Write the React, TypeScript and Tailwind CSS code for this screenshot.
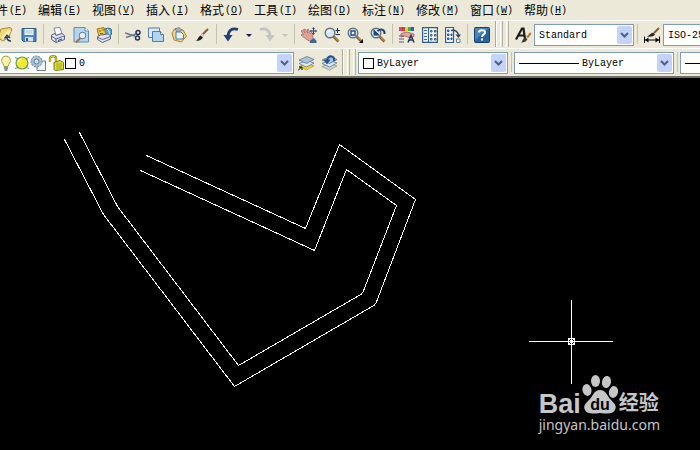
import clsx from 'clsx';
import { ReactNode } from 'react';

const menus = [
  { label: '文件', hotkey: 'F' },
  { label: '编辑', hotkey: 'E' },
  { label: '视图', hotkey: 'V' },
  { label: '插入', hotkey: 'I' },
  { label: '格式', hotkey: 'O' },
  { label: '工具', hotkey: 'T' },
  { label: '绘图', hotkey: 'D' },
  { label: '标注', hotkey: 'N' },
  { label: '修改', hotkey: 'M' },
  { label: '窗口', hotkey: 'W' },
  { label: '帮助', hotkey: 'H' },
];

const Icon = ({ children }: { children: ReactNode }) => (
  <svg viewBox="0 0 16 16" className="size-4 shrink-0" fill="none" aria-hidden="true">
    {children}
  </svg>
);

const Printer = () => (
  <>
    <path d="M4 1l6-.5 2 6-6 2z" fill="#fff" stroke="#8088a8" />
    <path d="M1.500 8L5 6.500l1 2 6-2 2.500 2v4L6 15.500l-4.500-3z" fill="#dfe4f2" stroke="#5a6288" />
    <path d="M2 9.500l4 2.500 8-3M6 12v3" stroke="#5a6288" />
    <path d="M8 13.500l4-1.500" stroke="#343c68" />
  </>
);

const Magnifier = () => (
  <>
    <path d="M9.500 9.500l5 5" stroke="#8a5a28" strokeWidth="2.600" />
    <path d="M10 9.500l4.500 4.500" stroke="#dba860" />
    <circle cx="6" cy="6" r="4.800" fill="#d4e6f5" stroke="#66727e" strokeWidth="1.400" />
    <path d="M3.500 5.500c.3-1.300 1.200-2 2.500-2" stroke="#fff" strokeWidth="1.200" />
  </>
);

const LayerStack = ({ bottom }: { bottom: string }) => (
  <>
    <path d="M1 11.500l8-3 7 2.500-7.500 4z" fill={bottom} stroke="#9a8c30" strokeWidth=".6" />
    <path d="M1 8.500L9 5.500l7 2.500-7.500 4z" fill="#dfe9f2" stroke="#51687c" strokeWidth=".7" />
    <path d="M1 5l8-3.500L16 4.500 8.500 8.500z" fill="#a8c4dc" stroke="#51687c" strokeWidth=".7" />
  </>
);

const icons = {
  open: (
    <Icon>
      <path d="M0 11L3 2l9-1.500 2 1.500-3 8-6 4z" fill="#f3d679" stroke="#a88a34" />
      <path d="M3 11l7-8 3 1-5 8z" fill="#fff0b0" />
      <path d="M13 14c-3 0-4-1.500-4-4M6.500 11.500L9 8.500l3 2.500" stroke="#24406e" strokeWidth="1.600" />
    </Icon>
  ),
  save: (
    <Icon>
      <path d="M1 1.500h14v13H2.500L1 13z" fill="#4b86c0" stroke="#2c5a8c" />
      <path d="M3.500 2h9v6h-9z" fill="#f4f9fd" />
      <path d="M4.500 4h7M4.500 6h7" stroke="#9cbcda" />
      <path d="M4 10h8v4.500H4z" fill="#cfe1f1" />
      <path d="M5 11h2v3H5z" fill="#2c5a8c" />
    </Icon>
  ),
  print: (
    <Icon>
      <Printer />
    </Icon>
  ),
  preview: (
    <Icon>
      <path d="M1 .5h11l3.500 3.500v11H1z" fill="#b5d5ec" stroke="#5f8db8" />
      <path d="M12 .5V4h3.500" fill="#fff" stroke="#5f8db8" />
      <path d="M7.500 11L3 15.500" stroke="#a87440" strokeWidth="2" />
      <circle cx="9.500" cy="8.500" r="3.300" fill="#e4f1fa" stroke="#6a7886" />
    </Icon>
  ),
  publish: (
    <Icon>
      <circle cx="12" cy="5" r="4" fill="#5aa8d0" stroke="#2e6c98" />
      <path d="M11 2c2 1 3 3 2 6" stroke="#d8f0fa" />
      <path d="M1 2l7-1.500 2 7-7 2z" fill="#f2c93c" stroke="#99751e" />
      <path d="M3 4h2M6 3h2M4 6.500h3" stroke="#8c6418" />
      <path d="M1.500 9.500l3-1.500 8-1 2 2v3l-8 3.500-5-3z" fill="#dfe4f2" stroke="#5a6288" />
      <path d="M2 10.500l4.500 2 8-3" stroke="#5a6288" />
    </Icon>
  ),
  cut: (
    <Icon>
      <path d="M0 6l10 3M1 10.500L11 7" stroke="#68788c" strokeWidth="1.400" />
      <circle cx="13" cy="5.500" r="2" stroke="#26345e" strokeWidth="1.500" />
      <circle cx="12.500" cy="11" r="2" stroke="#26345e" strokeWidth="1.500" />
    </Icon>
  ),
  copy: (
    <Icon>
      <path d="M.5 1h11v9.500H.5z" fill="#dcebf6" stroke="#4f7ea8" />
      <path d="M4.500 4.500h8l3 3v7h-11z" fill="#b2d4ee" stroke="#4f7ea8" />
      <path d="M12.500 4.500v3h3" fill="#fff" stroke="#4f7ea8" />
    </Icon>
  ),
  paste: (
    <Icon>
      <path d="M4 1.500L12 3l3.500 6-5 6L3 13 1 6z" fill="#efd488" stroke="#a5843a" />
      <path d="M4 2l4-1.500L11 3 6 5z" fill="#a8b4c0" stroke="#687888" strokeWidth=".8" />
      <path d="M5 5h5l2.500 2.500V12H5z" fill="#e8f3fb" stroke="#4f7ea8" />
    </Icon>
  ),
  brush: (
    <Icon>
      <path d="M14 2L8 8" stroke="#8a5a30" strokeWidth="2" />
      <path d="M8.500 6.500l2 2-1.500 1.500-2-2z" fill="#c8ccd4" />
      <path d="M2 14c1.500-1 2-4 4.500-5.500L9 10.500C7.500 13 5 14 2 14z" fill="#222" />
    </Icon>
  ),
  undo: (
    <Icon>
      <path d="M15 2.500C9 .5 5.500 3.500 5 9" stroke="#1f3f76" strokeWidth="2.800" />
      <path d="M.5 8h9L5 14.500z" fill="#1f3f76" />
    </Icon>
  ),
  redo: (
    <Icon>
      <path d="M1 2.500c6-2 9.500 1 10 6.500" stroke="#c1c3c4" strokeWidth="2.800" />
      <path d="M6.500 8h9L11 14.500z" fill="#c1c3c4" />
    </Icon>
  ),
  pan: (
    <Icon>
      <path
        d="M0 4l1.500-.8L4 6 2.500 2.500 4 2l3 4-1-3.500 1.500-.3L9.500 7l1-1.500 1.200.5.3 6L9 14.500 5 12 0 8l1-.8L2.500 7.500z"
        fill="#dfa297"
        stroke="#a4625c"
        strokeWidth=".7"
      />
      <path d="M9 14l4-3 2.500 3v2H9z" fill="#3c6898" />
      <path d="M12.500 1v6M9.500 4h6" stroke="#26456e" />
      <path d="M12.500 0L14 2h-3zM12.500 8L14 6h-3z" fill="#26456e" />
      <path d="M16 4l-1.500 1.500v-3zM9 4l1.500 1.500v-3z" fill="#26456e" />
    </Icon>
  ),
  zoom: (
    <Icon>
      <Magnifier />
      <path d="M11.500 3.500h4.500M13.500 1v5M11.500 7.500h4.500" stroke="#1c2c4c" />
    </Icon>
  ),
  zoomWindow: (
    <Icon>
      <Magnifier />
      <path d="M4 4h4v4H4z" fill="#fff" stroke="#1f4a8c" strokeWidth="1.400" />
      <path d="M16 12v4h-4z" fill="#000" />
    </Icon>
  ),
  zoomPrevious: (
    <Icon>
      <Magnifier />
      <path d="M14.500 7c.5-4-3-6-7-3" stroke="#1f4272" strokeWidth="2" />
      <path d="M3.500 2v6.500H10z" fill="#1f4272" />
    </Icon>
  ),
  properties: (
    <Icon>
      <path d="M0 0h3v4H0z" fill="#e13a9c" />
      <path d="M3 0h3v4H3z" fill="#e33830" />
      <path d="M6 0h3v4H6z" fill="#f0d52c" />
      <path d="M9 0h3v4H9z" fill="#3fb04a" />
      <path d="M12 0h3v4h-3z" fill="#3653d0" />
      <path d="M2 6.500l6-1.500 7 2v2.500l-5 1-4-1.500-4 1z" fill="#e0a89c" stroke="#945c54" strokeWidth=".7" />
      <path d="M0 9h5M0 12h5M0 15h5" stroke="#6a4c90" strokeWidth="1.200" />
      <path d="M9 15.500l3-7 3 7M10 13h4" stroke="#26345e" strokeWidth="1.500" />
    </Icon>
  ),
  designCenter: (
    <Icon>
      <path d="M.5.5h15v15H.5z" fill="#eaf3fa" stroke="#2f5c8c" strokeWidth="1.400" />
      <path d="M6.500 1v14" stroke="#2f5c8c" />
      <path d="M2 3.500h3M2 6.500h3M2 9.500h3M2 12.500h3" stroke="#3d6c9c" />
      <path d="M8.500 3.500h1.500v1.500H8.500zM12.500 3.500h1.500v1.500h-1.500zM8.500 7.500h1.500v1.500H8.500zM12.500 7.500h1.500v1.500h-1.500zM8.500 11.500h1.500v1.500H8.500zM12.500 11.500h1.500v1.500h-1.500z" stroke="#24507e" strokeWidth=".9" />
    </Icon>
  ),
  toolPalettes: (
    <Icon>
      <path d="M.5.5h8v15h-8z" fill="#eaf3fa" stroke="#2f5c8c" strokeWidth="1.200" />
      <path d="M2.500 3h1.500v1.500H2.500zM2.500 7h1.500v1.500H2.500zM2.500 11h1.500v1.500H2.500zM6 7h1v1.500H6zM6 11h1v1.500H6z" stroke="#24507e" />
      <path d="M6 3.500c4-1 7 1 7.500 5" stroke="#26456e" strokeWidth="1.400" />
      <path d="M10.500 7.500H16L13.500 11z" fill="#26456e" />
      <path d="M11.500 12h3.500v3.500h-3.500z" fill="#fff" stroke="#5b7f9c" />
    </Icon>
  ),
  help: (
    <Icon>
      <rect x=".5" y=".5" width="15" height="15" rx="1" fill="#28659e" stroke="#143f70" />
      <path d="M1 1h14L1 13z" fill="#4a86b8" />
      <path d="M5 5.500C5 2.500 11 2.500 11 5.500c0 2-3 2-3 4.500M8 11.500v2" stroke="#fff" strokeWidth="2" />
    </Icon>
  ),
  textStyle: (
    <Icon>
      <path d="M1 12.500L7 1.500h1.500L10 12M3.500 8.500H9" stroke="#1c1c1c" strokeWidth="2.200" />
      <path d="M16 6l-4 4.500" stroke="#b8793e" strokeWidth="2.200" />
      <path d="M6 15.500c1.500-1 2-4 4-5l2.500 1.500c-1 2.500-3 3.500-6.500 3.500z" fill="#3c3834" />
    </Icon>
  ),
  dimStyle: (
    <Icon>
      <path d="M15 1l-5 5" stroke="#8a5a30" strokeWidth="2" />
      <path d="M3 9.500c2-.5 3-3 6-4l2 2c-1.500 2-4 2.500-8 2z" fill="#2a2826" />
      <path d="M.5 9.500V16M15.500 9.500V16M1 13h14" stroke="#000" />
      <path d="M1 13l3.500-2.500v5zM15 13l-3.500-2.500v5z" fill="#000" />
    </Icon>
  ),
  bulb: (
    <Icon>
      <path d="M8 1a4.500 4.500 0 0 1 3 7.800L10 11.500H6L5 8.800A4.500 4.500 0 0 1 8 1z" fill="#fbf3a4" stroke="#a39b50" />
      <path d="M6 13h4M6.500 15h3" stroke="#5c6c90" strokeWidth="1.400" />
    </Icon>
  ),
  sun: (
    <Icon>
      <path d="M1 2.500l3 1M15 2.500l-3 1M1 13.500l3-1M15 13.500l-3-1" stroke="#5c9088" />
      <circle cx="8" cy="8" r="6" fill="#f4e835" stroke="#5e9c50" strokeWidth="1.200" />
      <path d="M4.500 7c.5-2 1.500-3 3-3" stroke="#fffbc0" strokeWidth="1.500" />
    </Icon>
  ),
  viewportFreeze: (
    <Icon>
      <path d="M7 6h8.500v9.500H7z" fill="#f2f6fa" stroke="#668098" />
      <circle cx="6.500" cy="6.500" r="5.500" fill="#a9c1d6" stroke="#5f7f9e" strokeDasharray="2 1" />
      <circle cx="6.500" cy="6.500" r="2.500" fill="#cfe0ee" stroke="#5f7f9e" />
    </Icon>
  ),
  unlock: (
    <Icon>
      <path d="M2 7V3.500C2 .5 8 .5 8 3.500V7" stroke="#8c8c1c" strokeWidth="2.400" />
      <path d="M2 7V3.500C2 .5 8 .5 8 3.500V7" stroke="#e3df4c" />
      <path d="M6 7.500l6-2 3.500 2v7l-8 1-1.500-1z" fill="#dede34" stroke="#77781c" />
      <path d="M8 9h6M8 11h6M8 13h6" stroke="#9a9a20" strokeWidth=".8" />
    </Icon>
  ),
  layers: (
    <Icon>
      <LayerStack bottom="#f0d834" />
      <path d="M0 15.500l3.500-3.500M1 12h3v3" stroke="#000" />
    </Icon>
  ),
  layerPrevious: (
    <Icon>
      <LayerStack bottom="#c4d6e6" />
      <path d="M13 6c1-5-5-7-7-1" stroke="#25558c" strokeWidth="2" />
      <path d="M2.500 4.500h7L6 9.500z" fill="#25558c" />
    </Icon>
  ),
};

type IconName = keyof typeof icons;

const ToolButton = ({ icon, label }: { icon: IconName; label: string }) => (
  <button
    type="button"
    aria-label={label}
    className="flex h-[22px] w-[23px] shrink-0 items-center justify-center"
  >
    {icons[icon]}
  </button>
);

const HistoryButton = ({ label, disabled }: { label: string; disabled?: boolean }) => (
  <button
    type="button"
    aria-label={label}
    disabled={disabled}
    className={clsx(
      'flex h-[22px] w-[13px] shrink-0 items-center justify-center',
      disabled ? 'text-[#c1c3c4]' : 'text-[#1a1a5c]'
    )}
  >
    <svg viewBox="0 0 6 3" className="h-[3px] w-[6px]" aria-hidden="true">
      <path d="M0 0h6L3 3z" fill="currentColor" />
    </svg>
  </button>
);

const Separator = () => (
  <span className="flex h-5 w-[6px] shrink-0 justify-center">
    <span className="w-px bg-[#c5c2b0]" />
  </span>
);

// right edge of one toolbar followed by the grip of the next
const Grip = () => (
  <span className="flex h-[26px] shrink-0 gap-[3px] px-[2px]">
    <span className="w-[2px] border-r border-white bg-[#aca899]" />
    <span className="w-[3px] border-x border-l-white border-r-[#b5b2a2]" />
    <span className="w-[3px] border-x border-l-white border-r-[#b5b2a2]" />
  </span>
);

interface DropdownProps {
  label: string;
  options: string[];
  className: string;
  children?: ReactNode;
}

const Dropdown = ({ label, options, className, children }: DropdownProps) => (
  <label
    className={clsx(
      'flex h-[22px] shrink-0 items-center border border-[#7f9db9] bg-white p-px',
      className
    )}
  >
    {children}
    <select
      aria-label={label}
      className="min-w-0 flex-1 appearance-none bg-transparent pt-px pl-[3px] font-['Liberation_Mono',monospace] text-[10px] leading-4 text-black outline-none"
    >
      {options.map((option) => (
        <option key={option}>{option}</option>
      ))}
    </select>
    <span className="flex h-full w-[15px] shrink-0 items-center justify-center rounded-xs bg-[#c3d3fb]">
      <svg viewBox="0 0 9 6" className="h-[6px] w-[9px]" fill="none" aria-hidden="true">
        <path d="M1 1l3.500 3.500L8 1" stroke="#4d6185" strokeWidth="2" />
      </svg>
    </span>
  </label>
);

const Swatch = () => <span className="block size-[11px] shrink-0 border border-black bg-white" />;

const MenuBar = () => (
  <nav className="-ml-4 flex h-5 shrink-0 items-center pt-px">
    {menus.map(({ label, hotkey }) => (
      <button
        key={hotkey}
        type="button"
        className="flex w-[54px] shrink-0 items-center text-left text-xs leading-5"
      >
        {label}
        <span className="pl-px font-['Liberation_Mono',monospace] text-[10px]">
          (<span className="underline">{hotkey}</span>)
        </span>
      </button>
    ))}
  </nav>
);

const StandardToolbar = () => (
  <div className="flex h-7 shrink-0 border-t border-white pt-[3px]">
    <div className="-ml-[6px] flex shrink-0">
      <ToolButton icon="open" label="打开" />
      <ToolButton icon="save" label="保存" />
      <Separator />
      <ToolButton icon="print" label="打印" />
      <ToolButton icon="preview" label="打印预览" />
      <ToolButton icon="publish" label="发布" />
      <Separator />
      <ToolButton icon="cut" label="剪切" />
      <ToolButton icon="copy" label="复制" />
      <ToolButton icon="paste" label="粘贴" />
      <ToolButton icon="brush" label="特性匹配" />
      <Separator />
      <ToolButton icon="undo" label="放弃" />
      <HistoryButton label="放弃列表" />
      <ToolButton icon="redo" label="重做" />
      <HistoryButton label="重做列表" disabled />
      <Separator />
      <ToolButton icon="pan" label="实时平移" />
      <ToolButton icon="zoom" label="实时缩放" />
      <ToolButton icon="zoomWindow" label="窗口缩放" />
      <ToolButton icon="zoomPrevious" label="缩放上一个" />
      <Separator />
      <ToolButton icon="properties" label="特性" />
      <ToolButton icon="designCenter" label="设计中心" />
      <ToolButton icon="toolPalettes" label="工具选项板" />
      <Separator />
      <ToolButton icon="help" label="帮助" />
    </div>
    <div className="-mt-[3px] flex shrink-0">
      <Grip />
    </div>
    <ToolButton icon="textStyle" label="文字样式" />
    <Dropdown label="文字样式控制" options={['Standard']} className="w-[100px]" />
    <Separator />
    <ToolButton icon="dimStyle" label="标注样式" />
    <Dropdown label="标注样式控制" options={['ISO-25']} className="w-[100px]" />
  </div>
);

const PropertiesToolbar = () => (
  <div className="flex h-[30px] shrink-0 border-t border-b-2 border-t-white border-b-[#716f64] pt-[3px]">
    <Dropdown label="图层" options={['0']} className="-ml-1 w-[298px]">
      {icons.bulb}
      {icons.sun}
      {icons.viewportFreeze}
      <span className="flex w-[19px] justify-center">{icons.unlock}</span>
      <Swatch />
    </Dropdown>
    <ToolButton icon="layers" label="图层特性管理器" />
    <ToolButton icon="layerPrevious" label="上一个图层" />
    <div className="-mt-[3px] flex shrink-0">
      <Grip />
    </div>
    <Dropdown label="颜色控制" options={['ByLayer']} className="w-[150px]">
      <span className="pl-[3px]">
        <Swatch />
      </span>
    </Dropdown>
    <Separator />
    <Dropdown label="线型控制" options={['ByLayer']} className="w-[160px]">
      <span className="ml-[3px] h-px w-[60px] bg-black" />
    </Dropdown>
    <Separator />
    <Dropdown label="线宽控制" options={['ByLayer']} className="w-[160px]">
      <span className="ml-[3px] h-px w-[60px] bg-black" />
    </Dropdown>
  </div>
);

const Drawing = () => (
  <svg
    viewBox="0 78 700 372"
    className="h-[372px] w-[700px]"
    fill="none"
    stroke="#fff"
    shapeRendering="crispEdges"
    role="img"
    aria-label="多线"
  >
    <path d="M64.500 139.500L103.500 214.500L234.500 386.500L375.500 304.500L415.500 199.500L339.500 144.500L305.500 228.500L146.500 155.500" />
    <path d="M79.500 132.500L117.500 206.500L238.500 365.500L362.500 293.500L396.500 205.500L346.500 169.500L314.500 250.500L140.500 170.500" />
    <path d="M529 341.500H613M571.500 300V384M568.500 338.500h6v6h-6z" />
    <path d="M569 339l5 5M574 339l-5 5" />
  </svg>
);

const Watermark = () => (
  <div className="absolute right-10 bottom-[15px] text-[#c6c6c6]">
    <div className="flex h-[44px] items-end">
      <span className="font-['Liberation_Sans',sans-serif] text-[27px] leading-7 font-bold">
        Bai
      </span>
      <svg viewBox="0 0 38 41" className="mb-[3px] h-[41px] w-[38px] shrink-0" aria-hidden="true">
        <g fill="#c6c6c6">
          <ellipse cx="6" cy="16" rx="4.500" ry="6" transform="rotate(-12 6 16)" />
          <ellipse cx="14.500" cy="7" rx="4.500" ry="6" />
          <ellipse cx="25.500" cy="8" rx="4.500" ry="6" transform="rotate(10 25.500 8)" />
          <ellipse cx="32.500" cy="18" rx="4.500" ry="6" transform="rotate(12 32.500 18)" />
          <path d="M19 16c6 0 7 6 11 10 4 4 6 6 4 10-2 4-7 4-15 3-8 1-13 1-15-3-2-4 0-6 4-10 4-4 5-10 11-10z" />
        </g>
        <text
          x="19"
          y="36"
          textAnchor="middle"
          fill="#000"
          className="font-['Liberation_Sans',sans-serif] text-[16px] font-bold"
        >
          du
        </text>
      </svg>
      <span className="font-['Noto_Sans_CJK_SC',sans-serif] text-[20px] leading-8 font-bold">
        经验
      </span>
    </div>
    <div className="-mt-[3px] font-['Noto_Sans',sans-serif] text-[14px] leading-5">
      jingyan.baidu.com
    </div>
  </div>
);

const App = () => (
  <div className="flex min-h-screen flex-col overflow-hidden bg-[#ece9d8] font-['Liberation_Sans','Noto_Sans_CJK_SC',sans-serif] text-black">
    <MenuBar />
    <StandardToolbar />
    <PropertiesToolbar />
    <main className="relative flex-1 overflow-hidden bg-black">
      <Drawing />
      <Watermark />
    </main>
  </div>
);

export default App;
